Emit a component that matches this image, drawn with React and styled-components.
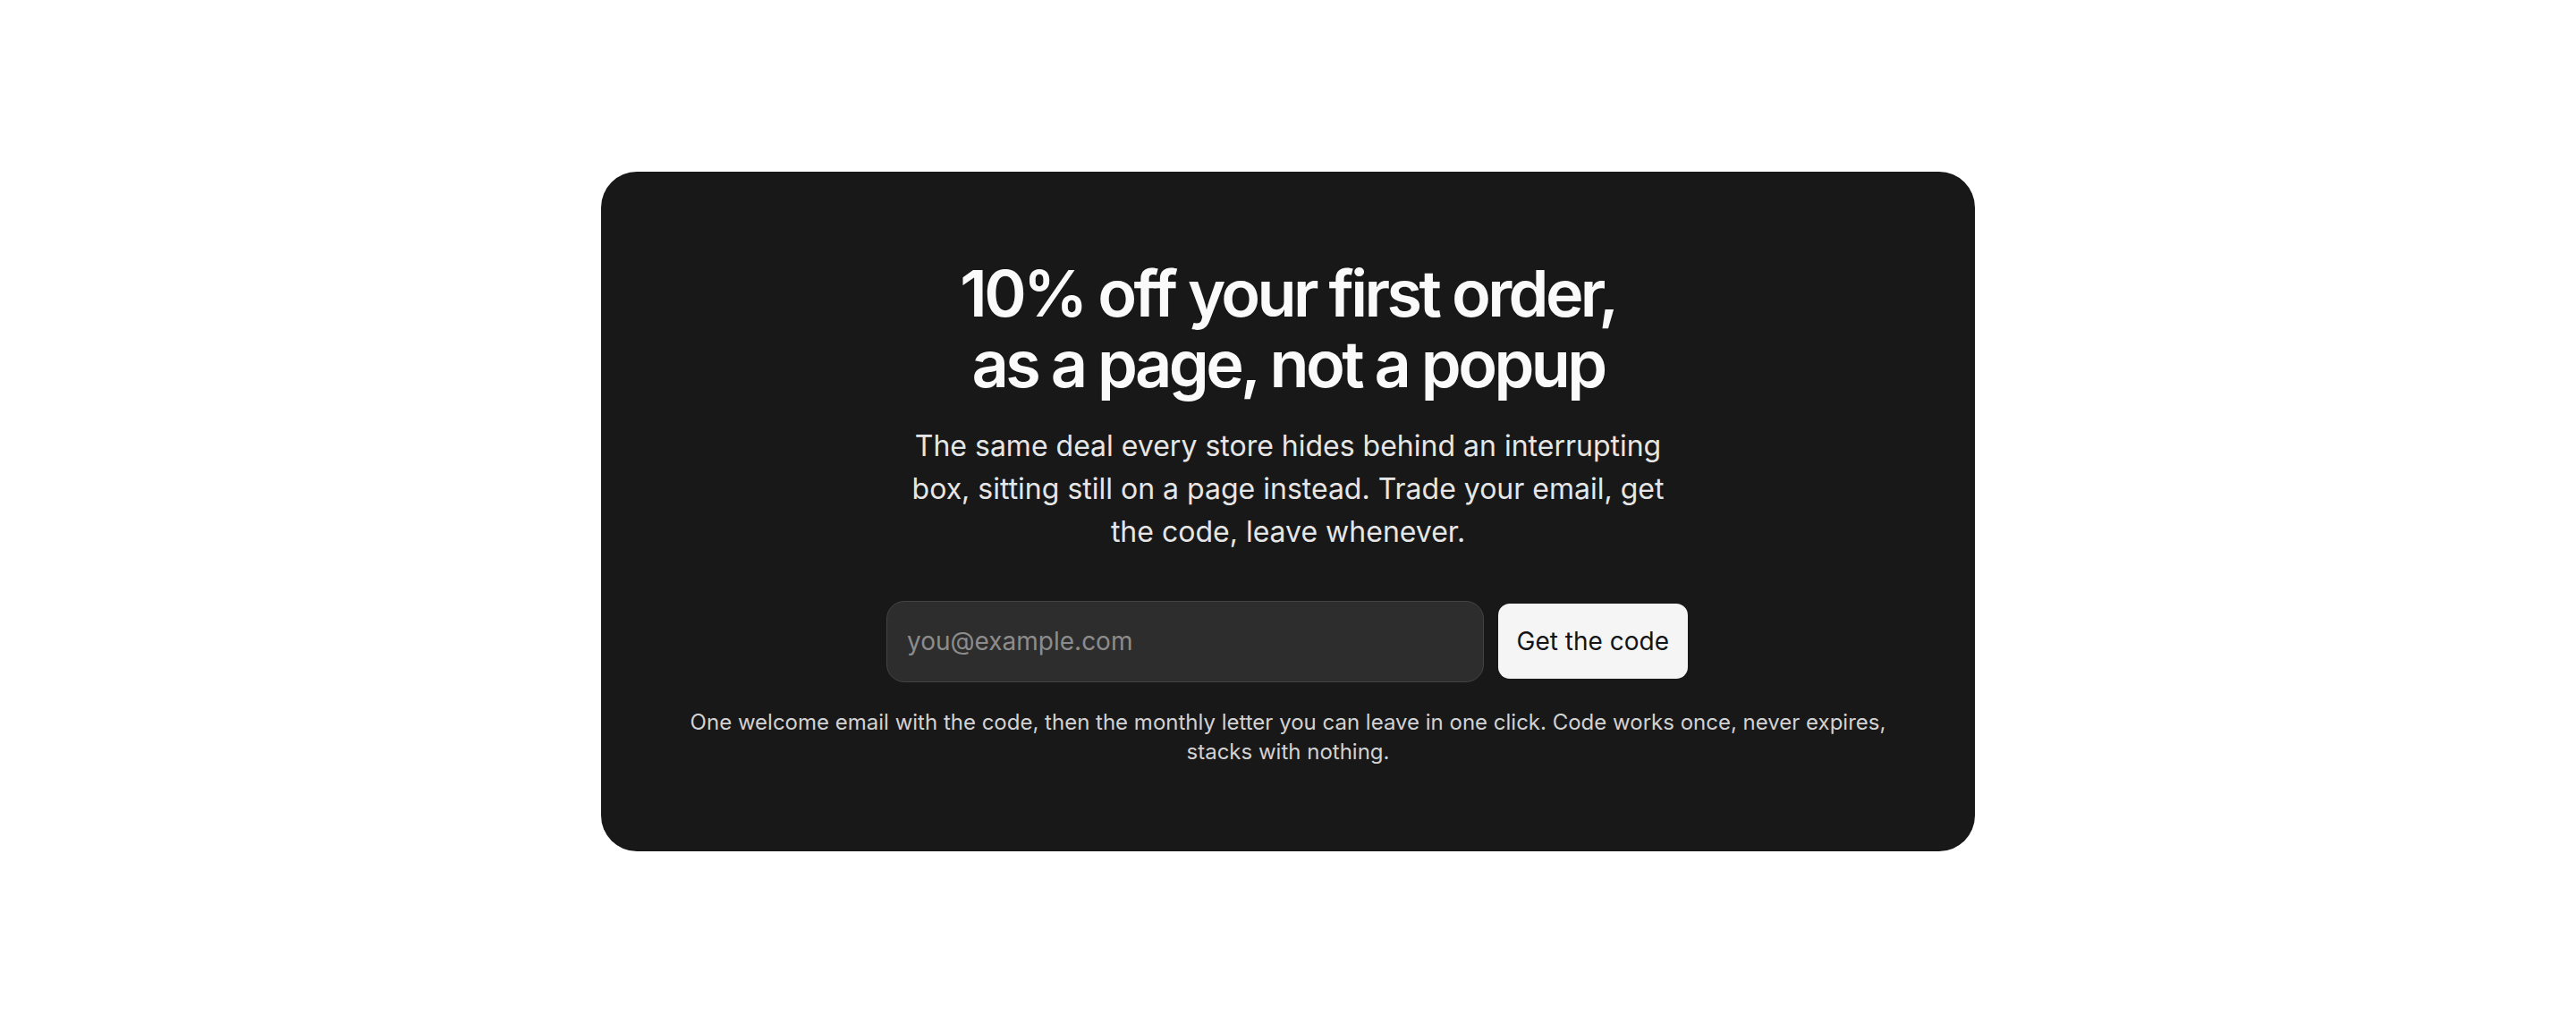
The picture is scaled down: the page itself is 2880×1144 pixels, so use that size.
import React from "react";
import styled, { createGlobalStyle } from "styled-components";

const Global = createGlobalStyle`
  html, body { margin: 0; padding: 0; background: #ffffff; }
  body { font-family: Inter, "Noto Sans", sans-serif; }
  * { box-sizing: border-box; }
`;

const Page = styled.main`
  min-height: 1144px;
  display: flex;
  align-items: center;
  justify-content: center;
`;

const Card = styled.section`
  width: 1536px;
  background: #181818;
  border-radius: 40px;
  padding: 96px 96px 94px;
  display: flex;
  flex-direction: column;
  align-items: center;
  text-align: center;
`;

const Title = styled.h1`
  margin: 0;
  font-family: Inter, sans-serif;
  font-weight: 600;
  font-size: 72px;
  line-height: 1.1;
  letter-spacing: -0.05em;
  color: #fafafa;
`;

const Lead = styled.p`
  margin: 28px 0 0;
  max-width: 860px;
  font-family: Inter, sans-serif;
  font-size: 32px;
  line-height: 1.5;
  color: #e6e6e6;
`;

const Form = styled.form`
  margin-top: 53px;
  width: 896px;
  margin-right: 2px;
  display: flex;
  align-items: center;
  gap: 16px;
`;

const EmailInput = styled.input`
  flex: 1;
  min-width: 0;
  height: 91px;
  padding: 0 22px;
  border: 1.5px solid #434343;
  border-radius: 20px;
  background: #2d2d2d;
  color: #f0f0f0;
  font-family: Inter, sans-serif;
  font-size: 28px;
  outline: none;
  &::placeholder { color: #8c8c8c; }
`;

const Submit = styled.button`
  height: 84px;
  padding: 0 21px;
  border: none;
  border-radius: 13px;
  background: #f5f5f5;
  color: #141414;
  font-family: Inter, sans-serif;
  font-size: 28px;
  cursor: pointer;
`;

const Note = styled.p`
  margin: 28px 0 0;
  font-family: Inter, sans-serif;
  font-size: 24px;
  line-height: 1.4;
  color: #d2d2d2;
`;

export default function App() {
  return (
    <>
      <Global />
      <Page>
        <Card>
          <Title>
            10% off your first order,
            <br />
            as a page, not a popup
          </Title>
          <Lead>
            The same deal every store hides behind an interrupting box, sitting
            still on a page instead. Trade your email, get the code, leave
            whenever.
          </Lead>
          <Form onSubmit={(e) => e.preventDefault()}>
            <EmailInput type="email" placeholder="you@example.com" />
            <Submit type="submit">Get the code</Submit>
          </Form>
          <Note>
            One welcome email with the code, then the monthly letter you can
            leave in one click. Code works once, never expires, stacks with
            nothing.
          </Note>
        </Card>
      </Page>
    </>
  );
}
